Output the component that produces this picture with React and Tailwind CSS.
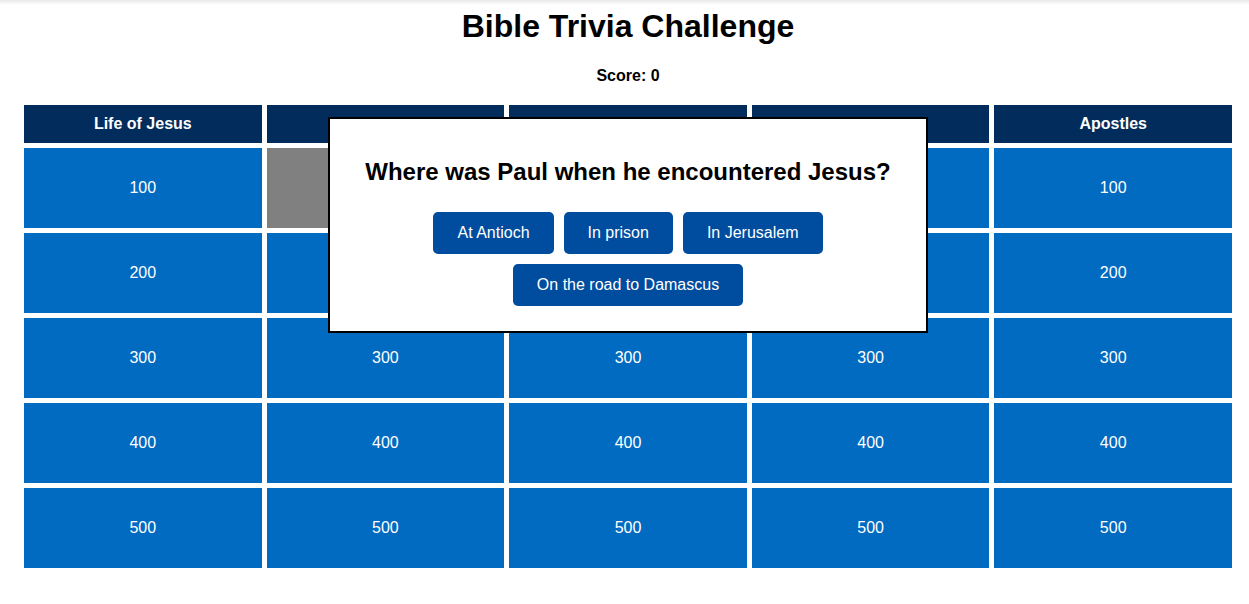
import React from "react";

const categories = ["Life of Jesus", "Old Testament", "Prophets", "Parables", "Apostles"];
const values = [100, 200, 300, 400, 500];

export default function App() {
  return (
    <div className="relative min-h-[604px] bg-white text-black" style={{ fontFamily: '"Liberation Sans", Arial, sans-serif' }}>
      <div className="absolute left-0 right-0 top-0 h-[5px] bg-gradient-to-b from-[#e9e9e9] to-white" />
      <div className="relative w-[1208px] ml-[24px]">
        <h1 className="pt-[8px] text-center text-[32px] font-bold leading-[37px]">Bible Trivia Challenge</h1>
        <p className="mt-[22px] text-center text-[16px] font-bold leading-[18px]">Score: 0</p>
        <div className="mt-[20px] grid grid-cols-5 gap-[5px]">
          {categories.map((c) => (
            <div key={c} className="flex h-[38px] items-center justify-center bg-[#012c5b] text-[16px] font-bold text-white">
              {c}
            </div>
          ))}
          {values.map((v) =>
            categories.map((c, ci) => (
              <div
                key={c + v}
                className={
                  v === 100 && ci === 1
                    ? "flex h-[80px] items-center justify-center bg-[#808080] text-[16px] text-white"
                    : "flex h-[80px] items-center justify-center bg-[#016ac1] text-[16px] text-white"
                }
              >
                {v === 100 && ci === 1 ? "" : v}
              </div>
            ))
          )}
        </div>
      </div>
      <div className="absolute left-[328px] top-[117px] w-[600px] border-2 border-black bg-white p-[20px]">
        <h2 className="mb-[21px] mt-[19px] text-center text-[24px] font-bold leading-[28px]">Where was Paul when he encountered Jesus?</h2>
        <div className="flex flex-wrap justify-center">
          {["At Antioch", "In prison", "In Jerusalem", "On the road to Damascus"].map((a) => (
            <button
              key={a}
              className="m-[5px] h-[42px] rounded-[5px] bg-[#004c9e] px-[24px] text-[16px] leading-[18px] text-white"
            >
              {a}
            </button>
          ))}
        </div>
      </div>
    </div>
  );
}
